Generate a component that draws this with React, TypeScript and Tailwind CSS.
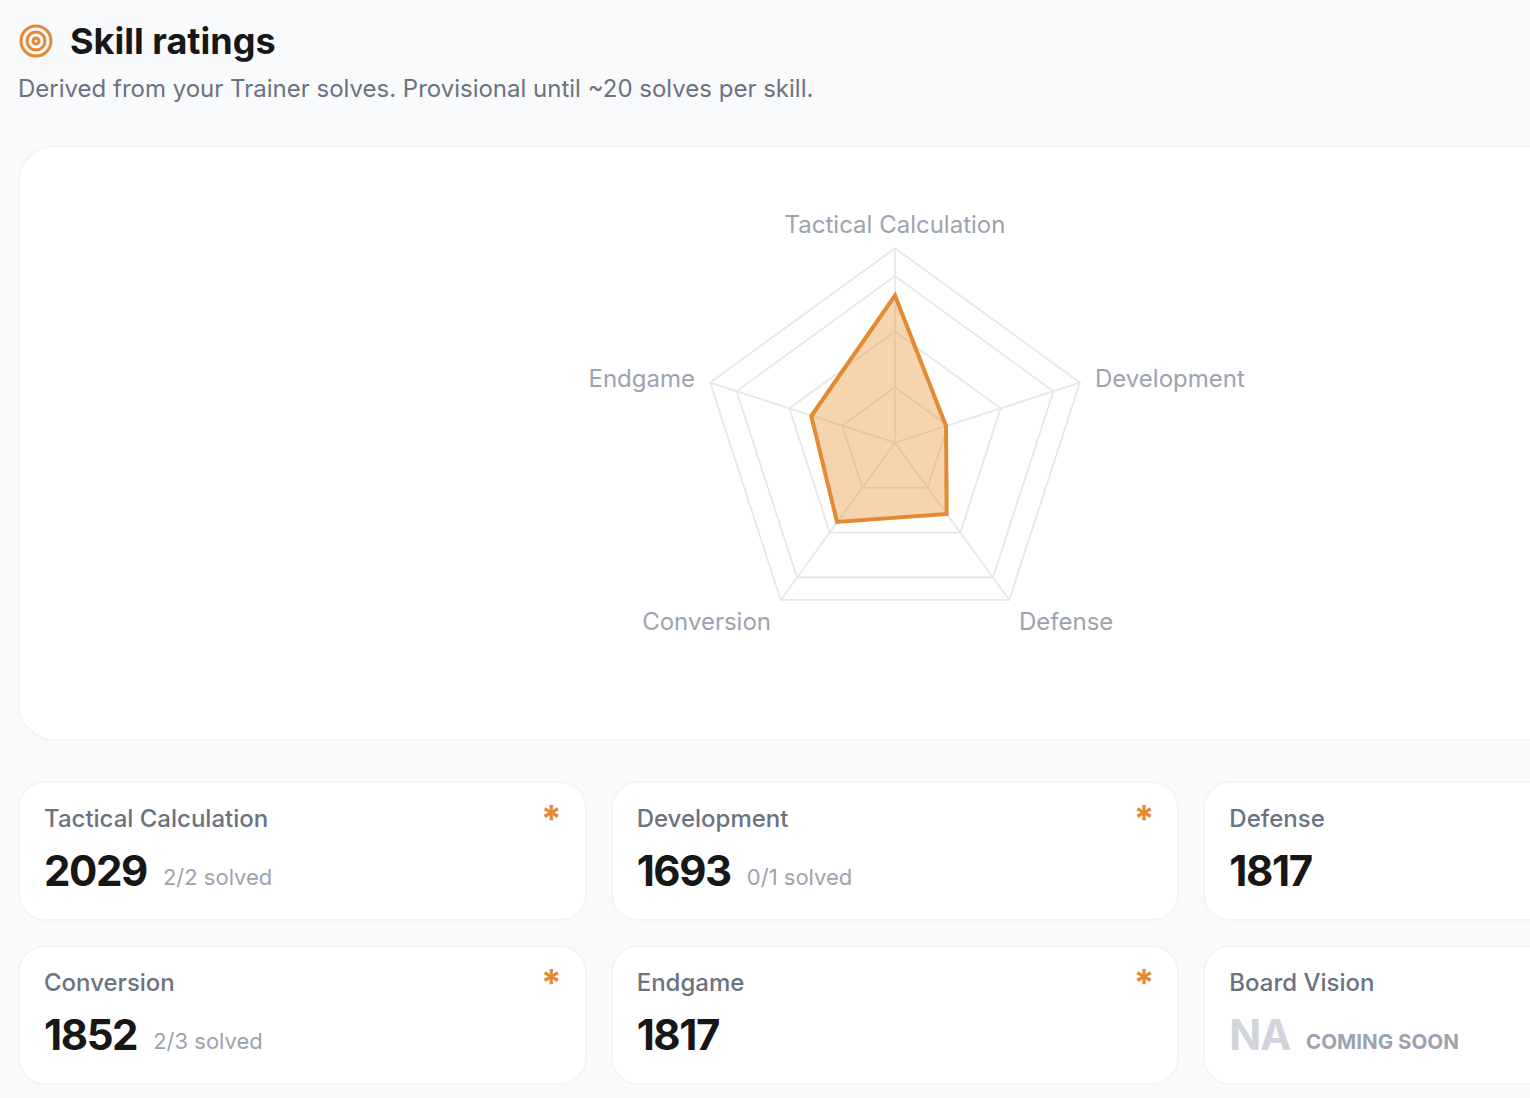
import { Target } from "lucide-react";

const CX = 500;
const CY = 295.7;
const RINGS = [194.4, 166.6, 111.1, 55.5];

const axes = [
  { label: "Tactical Calculation", x: 500, y: 86, anchor: "middle" },
  { label: "Development", x: 700, y: 240, anchor: "start" },
  { label: "Defense", x: 624, y: 483, anchor: "start" },
  { label: "Conversion", x: 376, y: 483, anchor: "end" },
  { label: "Endgame", x: 300, y: 240, anchor: "end" },
] as const;

const skills = [
  { name: "Tactical Calculation", value: "2029", note: "2/2 solved", provisional: true },
  { name: "Development", value: "1693", note: "0/1 solved", provisional: true },
  { name: "Defense", value: "1817", provisional: false },
  { name: "Conversion", value: "1852", note: "2/3 solved", provisional: true },
  { name: "Endgame", value: "1817", provisional: true },
];

function vertex(radius: number, index: number) {
  const angle = ((-90 + 72 * index) * Math.PI) / 180;
  return [CX + radius * Math.cos(angle), CY + radius * Math.sin(angle)];
}

function RadarChart() {
  const dataPoints = "500,148.5 551,279 551.7,367 442,375 416.3,269";
  return (
    <svg width={1000} height={592} viewBox="0 0 1000 592" className="block">
      {RINGS.map((r) => (
        <polygon
          key={r}
          points={[0, 1, 2, 3, 4].map((i) => vertex(r, i).join(",")).join(" ")}
          fill="none"
          stroke="#e5e7eb"
          strokeWidth={1.75}
        />
      ))}
      {[0, 1, 2, 3, 4].map((i) => {
        const [x, y] = vertex(RINGS[0], i);
        return <line key={i} x1={CX} y1={CY} x2={x} y2={y} stroke="#e5e7eb" strokeWidth={1.75} />;
      })}
      <polygon points={dataPoints} fill="#e58f2c" fillOpacity={0.38} stroke="#e38a32" strokeWidth={4} />
      {axes.map((a) => (
        <text key={a.label} x={a.x} y={a.y} textAnchor={a.anchor} fontSize={24} fill="#9ca3af">
          {a.label}
        </text>
      ))}
    </svg>
  );
}

function SkillCard({ name, value, note, provisional }: (typeof skills)[number]) {
  return (
    <div className="relative h-[140px] rounded-[27px] border-2 border-[#f3f4f6] bg-white pl-[24px] pt-[20px]">
      {provisional ? (
        <span className="absolute right-[23px] top-[18px] text-[37px] leading-[36px] font-bold text-[#e38a32]">*</span>
      ) : null}
      <p className="text-[24px] leading-[32px] font-medium text-[#6b7280]">{name}</p>
      <div className="mt-[9px] flex items-baseline gap-[16px]">
        <span className="text-[42px] leading-[54px] font-bold tracking-[-1.4px] text-[#171717]">{value}</span>
        {note ? <span className="-translate-y-px text-[22px] text-[#9ca3af]">{note}</span> : null}
      </div>
    </div>
  );
}

export default function App() {
  return (
    <div className="h-[1098px] w-[1530px] overflow-hidden bg-[#f9fafb] pl-[18px] pt-[18px] font-['Inter',sans-serif]">
      <div className="w-[1754px]">
        <div className="flex items-center gap-[16px]">
          <Target size={36} strokeWidth={2} className="text-[#e38a32]" />
          <h1 className="text-[36px] leading-[46px] font-bold text-[#171717]">Skill ratings</h1>
        </div>
        <p className="mt-[7px] text-[24px] leading-[36px] text-[#6b7280]">
          Derived from your Trainer solves. Provisional until ~20 solves per skill.
        </p>
        <div className="mt-[38px] flex h-[596px] justify-center rounded-[36px] border-2 border-[#f3f4f6] bg-white">
          <RadarChart />
        </div>
        <div className="mt-[40px] grid grid-cols-3 gap-[24px]">
          {skills.map((s) => (
            <SkillCard key={s.name} {...s} />
          ))}
          <div className="h-[140px] rounded-[27px] border-2 border-[#f3f4f6] bg-white pl-[24px] pt-[20px]">
            <p className="text-[24px] leading-[32px] font-medium text-[#6b7280]">Board Vision</p>
            <div className="mt-[9px] flex items-baseline gap-[16px]">
              <span className="text-[42px] leading-[54px] font-bold tracking-[-1.4px] text-[#d1d5db]">NA</span>
              <span className="-translate-y-px text-[20.6px] font-bold uppercase text-[#9ca3af]">Coming soon</span>
            </div>
          </div>
        </div>
      </div>
    </div>
  );
}
